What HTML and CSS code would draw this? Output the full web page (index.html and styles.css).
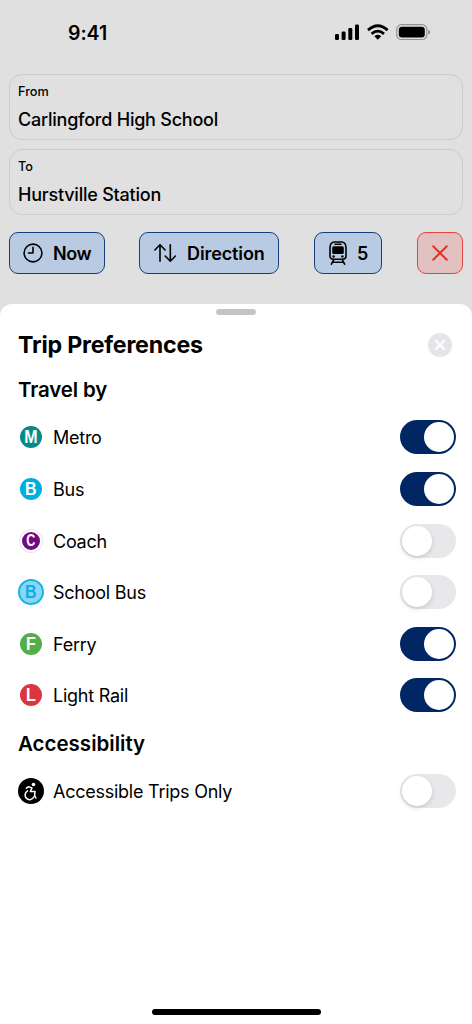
FILE: index.html
```html
<!DOCTYPE html>
<html lang="en">
<head>
<meta charset="utf-8">
<title>Trip Preferences</title>
<link rel="stylesheet" href="styles.css">
</head>
<body>
<main class="screen">
  <header class="status">
    <span class="time">9:41</span>
    <svg class="status-icons" width="96" height="18" viewBox="0 0 96 18">
      <rect x="0" y="10" width="4" height="6" rx="1.2"/><rect x="6.6" y="7.5" width="4" height="8.5" rx="1.2"/><rect x="13.3" y="4" width="4" height="12" rx="1.2"/><rect x="20" y="0.5" width="4" height="15.5" rx="1.2"/>
      <g fill="none" stroke="#000" stroke-width="2.8"><path d="M33 6.1Q42.8-2.6 52.6 6.1"/><path d="M36.6 9.9Q42.8 4.4 49 9.9"/></g>
      <path d="M39.4 12.2Q42.8 9.4 46.2 12.2L42.8 15.8Z"/>
      <rect x="61.7" y="0.7" width="30.2" height="14.8" rx="4.8" fill="none" stroke="#929292" stroke-width="1.2"/><rect x="63.8" y="2.8" width="26" height="10.6" rx="3.2"/><path d="M93.4 5.7Q95.2 6.5 95.2 8.1T93.4 10.6Z" fill="#858585"/>
    </svg>
  </header>
  <section class="trip">
    <div class="field"><span class="label">From</span><span class="place from">Carlingford High School</span></div>
    <div class="field"><span class="label">To</span><span class="place to">Hurstville Station</span></div>
    <div class="filters">
      <button class="chip now"><svg width="20" height="20" viewBox="0 0 20 20"><circle cx="10" cy="10" r="8.9"/><path d="M10 4.4V10H5.4"/></svg><span>Now</span></button>
      <button class="chip direction"><svg width="22" height="20" viewBox="0 0 22 20"><path d="M6 18.2V1.8M.9 7 6 1.8 11.1 7M16.3 1.8V18.2M11.2 13 16.3 18.2 21.4 13"/></svg><span>Direction</span></button>
      <button class="chip modes"><svg width="18" height="24" viewBox="0 0 18 24"><path d="M5 1H13Q17 1.5 17 7V15Q17 18.2 13.5 18.2H4.5Q1 18.2 1 15V7Q1 1.5 5 1Z"/><path d="M6 3.3H12" stroke-width="1.5"/><path d="M4.8 5.2H13.2Q14.8 5.2 14.8 6.8V11.5Q14.8 13 13.3 13H4.7Q3.2 13 3.2 11.5V6.8Q3.2 5.2 4.8 5.2Z" fill="#000" stroke="none"/><circle cx="4.6" cy="15.5" r="1.2" fill="#000" stroke="none"/><circle cx="13.4" cy="15.5" r="1.2" fill="#000" stroke="none"/><path d="M4.4 19.3 2.4 23.2M13.6 19.3 15.6 23.2M3.6 21.3H14.4"/></svg><span>5</span></button>
      <button class="chip clear" aria-label="Clear"><svg width="16" height="16" viewBox="0 0 16 16"><path d="M1.2 1.2 14.8 14.8M14.8 1.2 1.2 14.8"/></svg></button>
    </div>
  </section>
  <section class="sheet">
    <div class="grabber"></div>
    <div class="heading"><h1>Trip Preferences</h1><svg width="24" height="24" viewBox="0 0 24 24"><circle cx="12" cy="12" r="12" fill="#e4e4e9"/><path d="M7.8 7.8 16.2 16.2M16.2 7.8 7.8 16.2" stroke="#fff" stroke-width="2" stroke-linecap="round"/></svg></div>
    <h2 class="travel">Travel by</h2>
    <div class="list">
      <div class="row"><i class="mode metro"><em>M</em></i><span>Metro</span><b class="switch on"></b></div>
      <div class="row"><i class="mode bus"><em>B</em></i><span>Bus</span><b class="switch on"></b></div>
      <div class="row"><i class="mode coach"><em>C</em></i><span>Coach</span><b class="switch"></b></div>
      <div class="row"><i class="mode school"><em>B</em></i><span>School Bus</span><b class="switch"></b></div>
      <div class="row"><i class="mode ferry"><em>F</em></i><span>Ferry</span><b class="switch on"></b></div>
      <div class="row"><i class="mode rail"><em>L</em></i><span>Light Rail</span><b class="switch on"></b></div>
    </div>
    <h2 class="access">Accessibility</h2>
    <div class="row"><svg class="wheelchair" width="26" height="26" viewBox="0 0 26 26"><circle cx="13" cy="13" r="13"/><circle cx="15.5" cy="6.5" r="1.8" fill="#fff"/><g fill="none" stroke="#fff" stroke-width="1.5" stroke-linecap="round" stroke-linejoin="round"><path d="M8.4 10.2 10.2 8.8 14 9.9 12.4 13.6H17L16.6 17.6 17.9 20"/><path d="M9.6 12.9A4.6 4.6 0 1 0 15.9 18.8"/></g></svg><span>Accessible Trips Only</span><b class="switch"></b></div>
    <div class="home"></div>
  </section>
</main>
</body>
</html>
```
FILE: styles.css
```css
* { box-sizing: border-box; }
body { margin: 0; font-family: Inter, "Liberation Sans", sans-serif; color: #000; }
h1, h2 { margin: 0; font-weight: 600; }
.screen { width: 472px; height: 1024px; background: #e0e0e0; display: flex; flex-direction: column; overflow: hidden; }
.status { height: 74px; padding: 20px 41px 0 68px; display: flex; justify-content: space-between; align-items: flex-start; }
.time { font-size: 19.5px; line-height: 26px; font-weight: 600; letter-spacing: -.05px; }
.status-icons { margin-top: 4px; }
.trip { height: 230px; padding: 0 9px; display: flex; flex-direction: column; }
.field { height: 66px; margin-bottom: 9px; border: 1px solid #cbcbd5; border-radius: 13px; padding: 8px; display: flex; flex-direction: column; }
.label { font-size: 12.7px; line-height: 18px; font-weight: 500; }
.place { font-size: 18px; line-height: 26px; font-weight: 500; margin-top: 6px; white-space: nowrap; letter-spacing: -.23px; }
.filters { height: 42px; margin-top: 8px; display: flex; justify-content: space-between; }
.chip { height: 42px; margin: 0; padding: 0; border: 1px solid #173d7c; border-radius: 9px; background: #b8cbe2; display: flex; align-items: center; font: 600 18px/24px Inter, sans-serif; letter-spacing: -.1px; color: #000; white-space: nowrap; }
.chip span { padding-top: 2px; }
.chip svg { fill: none; stroke: #000; stroke-width: 1.6; stroke-linecap: round; stroke-linejoin: round; flex: none; }
.now { width: 96px; padding-left: 13px; gap: 10px; letter-spacing: -.4px; }
.direction { width: 140px; margin-left: -1px; padding-left: 14px; gap: 11px; }
.modes { width: 68px; padding-left: 14px; gap: 10px; }
.clear { width: 46px; justify-content: center; background: #e2c1c1; border-color: #e24540; }
.clear svg { stroke: #e42f29; stroke-width: 2; }
.sheet { height: 720px; padding: 5px 16px 0 18px; background: #fff; border-radius: 12px 12px 0 0; display: flex; flex-direction: column; }
.grabber { width: 40px; height: 6px; border-radius: 3px; background: #c4c4c6; align-self: center; margin-right: 2px; }
.heading { height: 32px; margin: 14px 4px 0 0; display: flex; align-items: center; justify-content: space-between; }
h1 { font-size: 23.2px; line-height: 32px; font-weight: 700; letter-spacing: -.2px; }
h2 { font-size: 20.5px; line-height: 28px; }
.travel { margin-top: 15px; letter-spacing: -.15px; }
.list { margin-top: 7.6px; }
.row { height: 51.6px; display: flex; align-items: center; font-size: 18px; line-height: 26px; letter-spacing: -.25px; }
.row > span { flex: 1; margin-left: 9px; padding-top: 2px; }
.mode { width: 22px; height: 22px; margin: 0 2px; border-radius: 50%; display: flex; align-items: center; justify-content: center; color: #fff; font: bold 19px/22px "Liberation Sans", sans-serif; letter-spacing: 0; flex: none; }
.mode em { font-style: normal; transform: scaleX(.84); }
.metro { background: #038b8b; }
.bus { background: #00aede; }
.coach { background: #730883; border: 2px solid #fff; box-shadow: 0 0 0 1px #e8e5e9; font-size: 16px; }
.coach em { transform: scaleX(.78); }
.school { width: 26px; height: 26px; margin: 0; background: #8bd5f5; border: 2px solid #16b4e5; color: #0caee3; }
.ferry { background: #54ae47; }
.rail { background: #db363f; }
.switch { width: 56px; height: 34px; border-radius: 17px; padding: 2px; background: #e8e8ea; display: flex; flex: none; }
.switch::after { content: ""; width: 30px; height: 30px; border-radius: 50%; background: #fff; box-shadow: 0 2px 5px #0002; }
.on { background: #002664; justify-content: flex-end; }
.on::after { box-shadow: none; }
.access { margin-top: 8.4px; }
.access + .row { margin-top: 8px; }
.wheelchair { flex: none; }
.home { width: 169px; height: 6px; border-radius: 3px; background: #000; align-self: center; margin: auto 2px 9px 0; }
```
